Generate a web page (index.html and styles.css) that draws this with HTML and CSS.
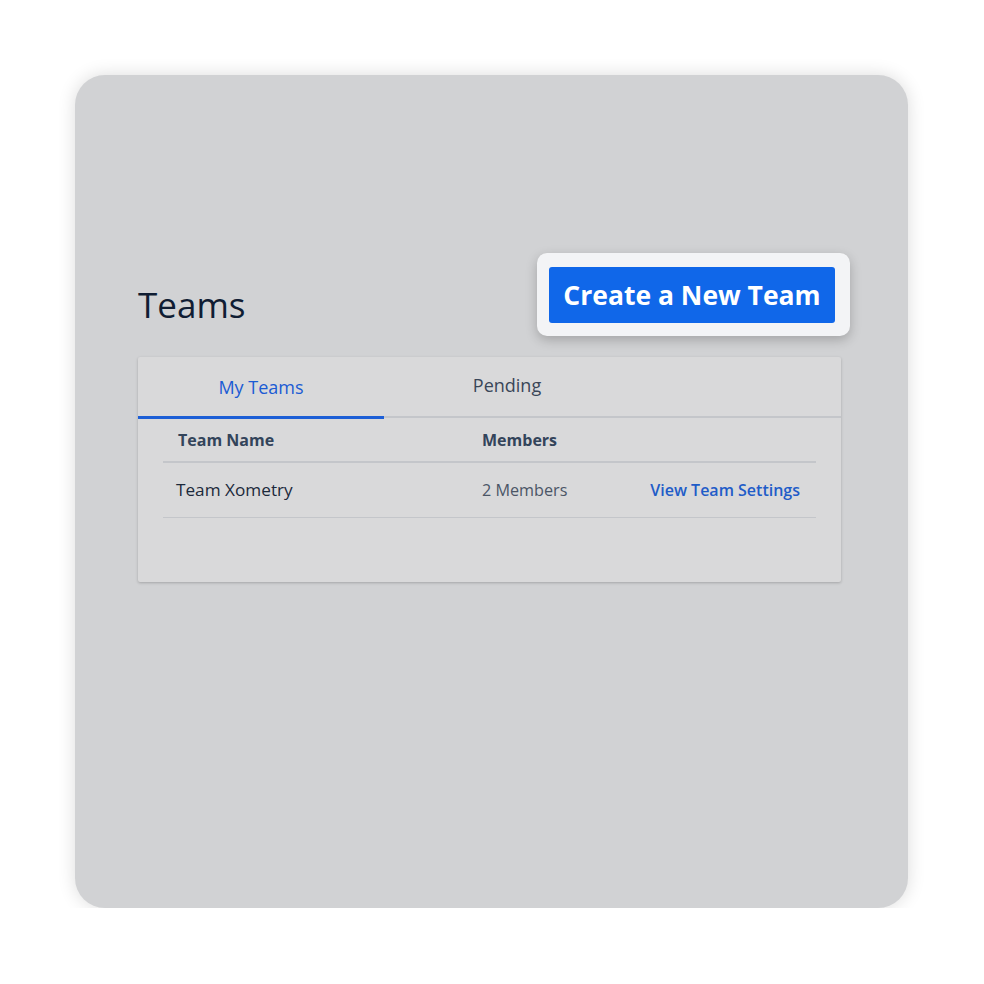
FILE: index.html
```html
<!DOCTYPE html>
<html>
<head>
<meta charset="utf-8">
<link rel="stylesheet" href="styles.css">
</head>
<body>
<div class="panel">
  <div class="header">
    <h1 class="title">Teams</h1>
    <div class="highlight">
      <button class="btn">Create a New Team</button>
    </div>
  </div>
  <div class="card">
    <div class="tabs">
      <div class="tab active">My Teams</div>
      <div class="tab">Pending</div>
    </div>
    <div class="table">
      <div class="row head">
        <div class="c1">Team Name</div>
        <div class="c2">Members</div>
        <div class="c3"></div>
      </div>
      <div class="row">
        <div class="c1 name">Team Xometry</div>
        <div class="c2 members">2 Members</div>
        <div class="c3 link">View Team Settings</div>
      </div>
    </div>
  </div>
</div>
</body>
</html>
```
FILE: styles.css
```css
html, body {
  margin: 0;
  padding: 0;
  background: #ffffff;
}
body {
  font-family: "Open Sans", "Noto Sans", sans-serif;
  padding: 75px 0 0 75px;
}
.panel {
  width: 833px;
  height: 833px;
  box-sizing: border-box;
  background: #d1d2d4;
  border-radius: 30px;
  box-shadow: 0 0 18px rgba(0, 0, 0, 0.14);
  padding: 192px 67px 0 63px;
}
.header {
  width: 703px;
  height: 56px;
  display: flex;
  justify-content: space-between;
  align-items: center;
}
.title {
  margin: 0;
  font-size: 35px;
  font-weight: 400;
  color: #101d33;
  line-height: 1;
  padding-top: 18px;
}
.highlight {
  background: #f3f4f6;
  border-radius: 10px;
  padding: 14px 15px 13px 12px;
  margin: -14px -9px -13px 0;
  box-shadow: 0 4px 12px rgba(0, 0, 0, 0.22);
}
.btn {
  display: block;
  width: 286px;
  height: 56px;
  border: none;
  border-radius: 3px;
  background: #1067e9;
  color: #ffffff;
  font-family: "Open Sans", "Noto Sans", sans-serif;
  font-weight: 700;
  font-size: 26.5px;
  padding: 0 0 1px 0;
}
.card {
  margin-top: 34px;
  width: 703px;
  height: 225px;
  background: #d9d9da;
  border-radius: 2px;
  box-shadow: 0 1px 3px rgba(0, 0, 0, 0.22);
}
.tabs {
  display: flex;
  height: 61px;
  box-sizing: border-box;
  border-bottom: 2px solid #c4c6ca;
}
.tab {
  width: 246px;
  display: flex;
  align-items: center;
  justify-content: center;
  font-size: 18px;
  color: #3a4658;
  padding-bottom: 3px;
  box-sizing: border-box;
}
.tab.active {
  color: #1b5bd4;
  border-bottom: 3px solid #1d5fd6;
  margin-bottom: -3px;
  padding-bottom: 0;
}
.table {
  margin: 0 25px;
}
.row {
  display: flex;
  align-items: center;
  height: 54px;
  border-bottom: 1px solid #c4c6ca;
}
.row.head {
  height: 43px;
  border-bottom: 2px solid #c4c6ca;
  font-weight: 700;
  font-size: 16px;
  color: #33445a;
}
.c1 {
  width: 319px;
  padding-left: 15px;
  box-sizing: border-box;
}
.row .c1.name {
  padding-left: 13px;
  font-size: 17.2px;
  color: #1c293b;
  padding-bottom: 1px;
}
.c2 {
  width: 150px;
}
.members {
  font-size: 16.2px;
  color: #4b5566;
}
.c3 {
  flex: 1;
  text-align: right;
  padding-right: 16px;
}
.link {
  font-size: 16px;
  font-weight: 600;
  color: #1f5cc8;
}
```
